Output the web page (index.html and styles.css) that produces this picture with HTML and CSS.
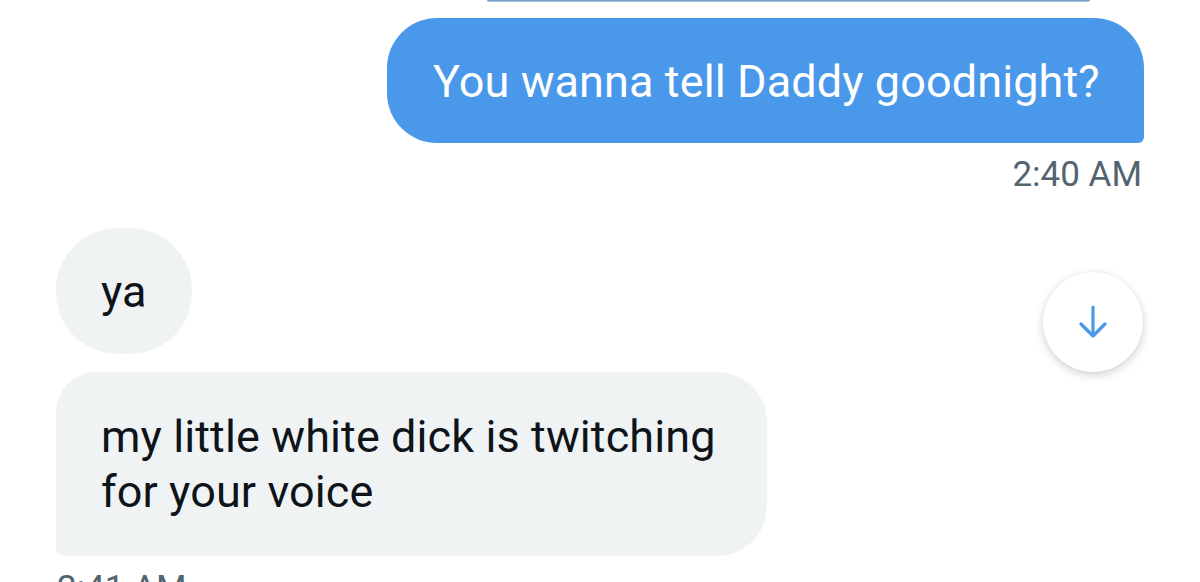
FILE: index.html
```html
<!DOCTYPE html>
<html>
<head>
<meta charset="utf-8">
<link rel="stylesheet" href="styles.css">
</head>
<body>
<div class="thread">
  <div class="prev-edge"></div>
  <div class="row sent-row">
    <div class="bubble sent">You wanna tell Daddy goodnight?</div>
  </div>
  <div class="time time-right">2:40 AM</div>
  <div class="row recv-row">
    <div class="bubble recv ya">ya</div>
  </div>
  <div class="row recv-row">
    <div class="bubble recv long">my little white dick is twitching<br>for your voice</div>
  </div>
  <div class="time time-left">2:41 AM</div>
</div>
<button class="scroll-down" aria-label="Scroll down">
  <svg width="30" height="34" viewBox="0 0 30 34">
    <path d="M15 2 V31 M3 19 L15 31 L27 19" fill="none" stroke="#4a98e9" stroke-width="3.2" stroke-linecap="round" stroke-linejoin="round"/>
  </svg>
</button>
</body>
</html>
```
FILE: styles.css
```css
html, body {
  margin: 0;
  padding: 0;
  background: #ffffff;
}
body {
  width: 1200px;
  height: 582px;
  overflow: hidden;
  position: relative;
  font-family: Roboto, "Liberation Sans", sans-serif;
}
.thread {
  display: flex;
  flex-direction: column;
}
.prev-edge {
  height: 2px;
  margin-left: 487px;
  width: 603px;
  background: linear-gradient(to bottom, #5f90bf, #bcd3ea);
  border-radius: 0 0 2px 2px;
}
.row {
  display: flex;
}
.sent-row {
  justify-content: flex-end;
  padding-right: 56px;
  margin-top: 16px;
}
.recv-row {
  justify-content: flex-start;
  padding-left: 56px;
}
.bubble {
  font-size: 45px;
  line-height: 55px;
  letter-spacing: 0.1px;
}
.sent {
  background: #4a98e9;
  color: #ffffff;
  width: 757px;
  box-sizing: border-box;
  padding: 36px 40px 34px 46px;
  border-radius: 50px 50px 6px 50px;
  white-space: nowrap;
}
.recv {
  background: #eff3f4;
  color: #0f1419;
}
.ya {
  margin-top: 33px;
  width: 136px;
  box-sizing: border-box;
  padding: 36px 40px 35px 45px;
  border-radius: 62px;
  letter-spacing: 0;
}
.long {
  margin-top: 18px;
  width: 711px;
  box-sizing: border-box;
  padding: 37px 30px 37px 45px;
  border-radius: 40px 50px 50px 8px;
  white-space: nowrap;
}
.time {
  font-size: 35px;
  line-height: 40px;
  color: #536471;
}
.time-right {
  margin-top: 12px;
  text-align: right;
  padding-right: 58px;
}
.time-left {
  margin-top: 13px;
  padding-left: 57px;
}
.scroll-down {
  position: absolute;
  left: 1043px;
  top: 272px;
  width: 100px;
  height: 100px;
  border: none;
  border-radius: 50%;
  background: #ffffff;
  box-shadow: 0 3px 10px rgba(0, 0, 0, 0.18), 0 0 2px rgba(0, 0, 0, 0.06);
  display: flex;
  align-items: center;
  justify-content: center;
  padding: 0;
}
```
